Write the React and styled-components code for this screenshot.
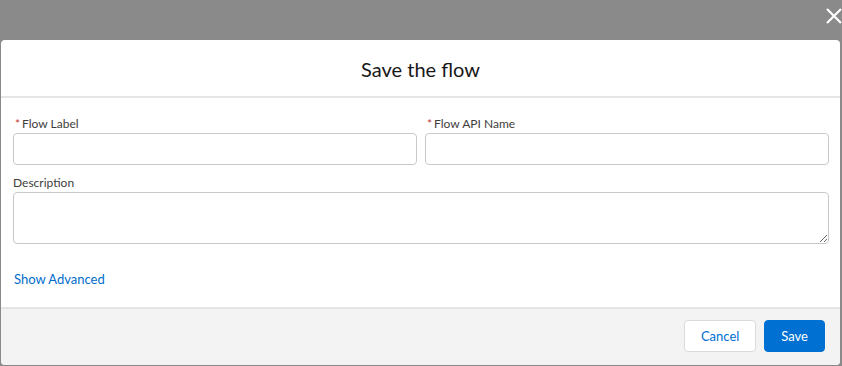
import React from "react";
import styled, { createGlobalStyle } from "styled-components";

const Global = createGlobalStyle`
  html, body { margin: 0; padding: 0; }
  body { background: #8a8a8a; font-family: Lato, "Segoe UI", "Noto Sans", sans-serif; }
  * { box-sizing: border-box; }
`;

const Backdrop = styled.div`
  position: relative;
  width: 842px;
  height: 366px;
  background: #8a8a8a;
  padding: 40px 2px 1px 1px;
  display: flex;
  flex-direction: column;
`;

const CloseButton = styled.button`
  position: absolute;
  top: 6px;
  right: -2px;
  width: 20px;
  height: 20px;
  padding: 0;
  border: 0;
  background: transparent;
  display: flex;
  align-items: center;
  justify-content: center;
`;

const Modal = styled.div`
  flex: 1;
  background: #fff;
  border-radius: 4px;
  display: flex;
  flex-direction: column;
  overflow: hidden;
`;

const Header = styled.header`
  height: 58px;
  border-bottom: 2px solid #e5e5e5;
  display: flex;
  align-items: center;
  justify-content: center;
`;

const Title = styled.h2`
  margin: 0;
  font-weight: 400;
  font-size: 20px;
  color: #181818;
  padding-top: 2px;
`;

const Body = styled.div`
  flex: 1;
  padding: 17px 11px 0 12px;
  display: flex;
  flex-direction: column;
`;

const Row = styled.div`
  display: grid;
  grid-template-columns: 1fr 1fr;
  gap: 8px;
`;

const Field = styled.div`
  display: flex;
  flex-direction: column;
  margin-bottom: ${(p) => p.$mb || 0}px;
`;

const Label = styled.label`
  font-size: 12px;
  color: #3e3e3c;
  line-height: 18px;
  height: 18px;
`;

const Req = styled.abbr`
  color: #c23934;
  text-decoration: none;
  margin: 0 2px 0 2px;
`;

const Input = styled.input`
  height: 32px;
  width: 100%;
  border: 1px solid #c9c9c9;
  border-radius: 4px;
  background: #fff;
  font: inherit;
  outline: none;
`;

const TextArea = styled.textarea`
  height: 52px;
  width: 100%;
  border: 1px solid #c9c9c9;
  border-radius: 4px;
  background: #fff;
  font: inherit;
  resize: vertical;
  outline: none;
  display: block;
`;

const Link = styled.a`
  margin-top: 27px;
  font-size: 13px;
  color: #006dcc;
  text-decoration: none;
  padding-left: 1px;
`;

const Footer = styled.footer`
  height: 58px;
  background: #f3f3f3;
  border-top: 2px solid #e5e5e5;
  display: flex;
  justify-content: flex-end;
  align-items: center;
  gap: 8px;
  padding: 0 15px 2px 0;
`;

const Button = styled.button`
  height: 32px;
  padding: 0 16px;
  border-radius: 4px;
  font-family: inherit;
  font-size: 13px;
  border: 1px solid ${(p) => (p.$brand ? "#0070d2" : "#dddbda")};
  background: ${(p) => (p.$brand ? "#0070d2" : "#fff")};
  color: ${(p) => (p.$brand ? "#fff" : "#0070d2")};
`;

export default function App() {
  return (
    <>
      <Global />
      <Backdrop>
        <CloseButton aria-label="Close">
          <svg width="18" height="18" viewBox="0 0 18 18">
            <path d="M2 2 L16 16 M16 2 L2 16" stroke="#fff" strokeWidth="2.2" />
          </svg>
        </CloseButton>
        <Modal>
          <Header>
            <Title>Save the flow</Title>
          </Header>
          <Body>
            <Row>
              <Field $mb={9}>
                <Label><Req>*</Req>Flow Label</Label>
                <Input />
              </Field>
              <Field $mb={9}>
                <Label><Req>*</Req>Flow API Name</Label>
                <Input />
              </Field>
            </Row>
            <Field>
              <Label>Description</Label>
              <TextArea />
            </Field>
            <Link href="#">Show Advanced</Link>
          </Body>
          <Footer>
            <Button>Cancel</Button>
            <Button $brand>Save</Button>
          </Footer>
        </Modal>
      </Backdrop>
    </>
  );
}
